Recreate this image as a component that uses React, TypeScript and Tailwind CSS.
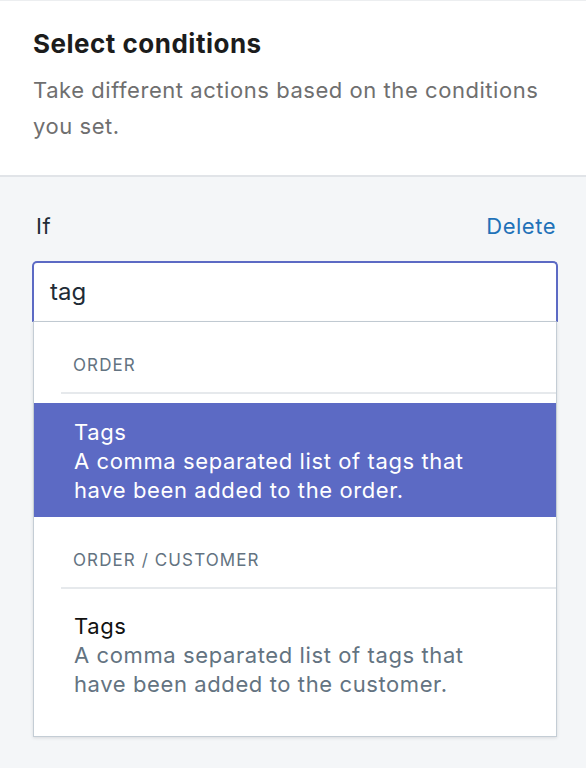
const font = "font-['Inter','Liberation_Sans',sans-serif]";

function Option({ title, desc, active }: { title: string; desc: string; active?: boolean }) {
  return (
    <div className={active ? "bg-[#5c6ac4] pl-10 pr-4 pt-[15px] pb-[12px]" : "bg-white pl-10 pr-4 pt-[23px] pb-[12px]"}>
      <div className={active ? "text-[22px] leading-[29px] tracking-[0.6px] text-white" : "text-[22px] leading-[29px] tracking-[0.6px] text-[#111]"}>{title}</div>
      <div className={active ? "text-[22px] leading-[29px] tracking-[0.6px] text-white w-[440px]" : "text-[22px] leading-[29px] tracking-[0.6px] text-[#637381] w-[440px]"}>{desc}</div>
    </div>
  );
}

function Section({ label }: { label: string }) {
  return (
    <div className="pl-[27px]">
      <div className="pl-[12px] pt-[32px] pb-[16px] border-b-2 border-[#e6e9ec] text-[17px] leading-[22px] tracking-[1.1px] text-[#637381]">{label}</div>
    </div>
  );
}

export default function App() {
  return (
    <div className={`${font} w-[586px] h-[768px] bg-[#f4f6f8] overflow-hidden`}>
      <div className="bg-white border-t border-[#eceef0] border-b-2 border-b-[#e1e4e8] px-[33px] pt-[28px] pb-[31px]">
        <h1 className="text-[26px] leading-[30px] font-bold tracking-[0.5px] text-[#1c1c1c]">Select conditions</h1>
        <p className="mt-[13px] text-[22px] leading-[36px] tracking-[0.55px] text-[#6f6f6f]">Take different actions based on the conditions you set.</p>
      </div>
      <div className="px-[28px] pt-[35px]">
        <div className="flex items-center justify-between px-[8px] text-[22px] leading-[28px] tracking-[0.5px]">
          <span className="text-[#212b36]">If</span>
          <span className="text-[#1f72b8] -mr-[6px]">Delete</span>
        </div>
        <div className="mt-[21px] ml-[4px] h-[61px] bg-white border-2 border-b border-[#5c6ac4] border-b-[#c4cdd5] rounded-t-[5px] flex items-center px-[16px]">
          <span className="text-[24px] text-[#212b36]">tag</span>
        </div>
        <div className="ml-[5px] mr-[1px] bg-white border border-t-0 border-[#c4cdd5] shadow-[0_1px_3px_rgba(63,63,68,0.15)] pb-[25px]">
          <Section label="ORDER" />
          <div className="mt-[9px]">
            <Option active title="Tags" desc="A comma separated list of tags that have been added to the order." />
          </div>
          <Section label="ORDER / CUSTOMER" />
          <Option title="Tags" desc="A comma separated list of tags that have been added to the customer." />
        </div>
      </div>
    </div>
  );
}
